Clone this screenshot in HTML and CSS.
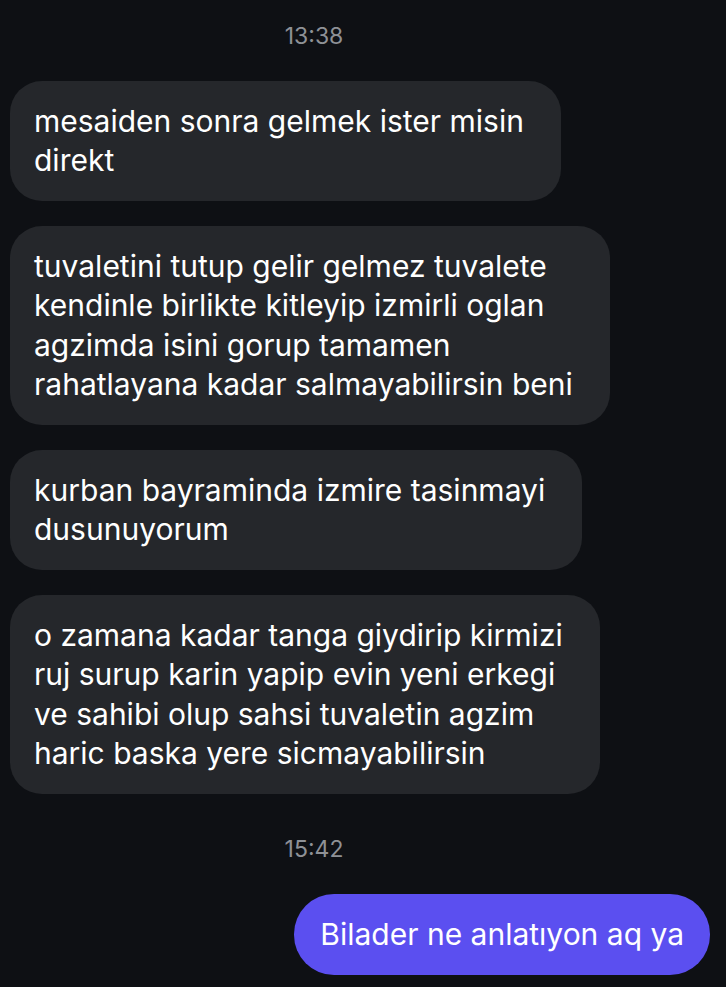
FILE: index.html
```html
<!DOCTYPE html>
<html lang="tr">
<head>
  <meta charset="UTF-8">
  <meta name="viewport" content="width=device-width, initial-scale=1.0">
  <title>Sohbet</title>
  <link rel="stylesheet" href="styles.css">
</head>
<body>
  <main class="chat">
    <div class="stamp">13:38</div>
    <div class="msg in">mesaiden sonra gelmek ister misin<br>direkt</div>
    <div class="msg in">tuvaletini tutup gelir gelmez tuvalete<br>kendinle birlikte kitleyip izmirli oglan<br>agzimda isini gorup tamamen<br>rahatlayana kadar salmayabilirsin beni</div>
    <div class="msg in">kurban bayraminda izmire tasinmayi<br>dusunuyorum</div>
    <div class="msg in">o zamana kadar tanga giydirip kirmizi<br>ruj surup karin yapip evin yeni erkegi<br>ve sahibi olup sahsi tuvaletin agzim<br>haric baska yere sicmayabilirsin</div>
    <div class="stamp late">15:42</div>
    <div class="msg out">Bilader ne anlatıyon aq ya</div>
  </main>
</body>
</html>
```

FILE: styles.css
```css
:root {
  --bg: #0e1014;
  --bubble-in: #25272b;
  --bubble-out: #5b4ff0;
  --text: #ffffff;
  --muted: #8e9196;
}

* {
  box-sizing: border-box;
  margin: 0;
  padding: 0;
}

html, body {
  background: var(--bg);
}

body {
  width: 726px;
  height: 987px;
  overflow: hidden;
  font-family: Inter, "Noto Sans", sans-serif;
  color: var(--text);
}

.chat {
  display: flex;
  flex-direction: column;
  align-items: flex-start;
  gap: 25px;
  padding: 22px 16px 0 10px;
}

.stamp {
  align-self: stretch;
  text-align: center;
  color: var(--muted);
  font-size: 23px;
  line-height: 28px;
  padding-right: 92px;
  margin-bottom: 6px;
}

.stamp.late {
  margin-top: 16px;
  margin-bottom: 6px;
}

.msg {
  width: fit-content;
  font-size: 30px;
  line-height: 39.5px;
  padding: 20.5px 37px 20.5px 24px;
  border-radius: 32px;
  white-space: nowrap;
}

.msg.in {
  background: var(--bubble-in);
}

.msg.out {
  align-self: flex-end;
  background: var(--bubble-out);
  border-radius: 40px;
  padding: 20.5px 26px;
}
```
